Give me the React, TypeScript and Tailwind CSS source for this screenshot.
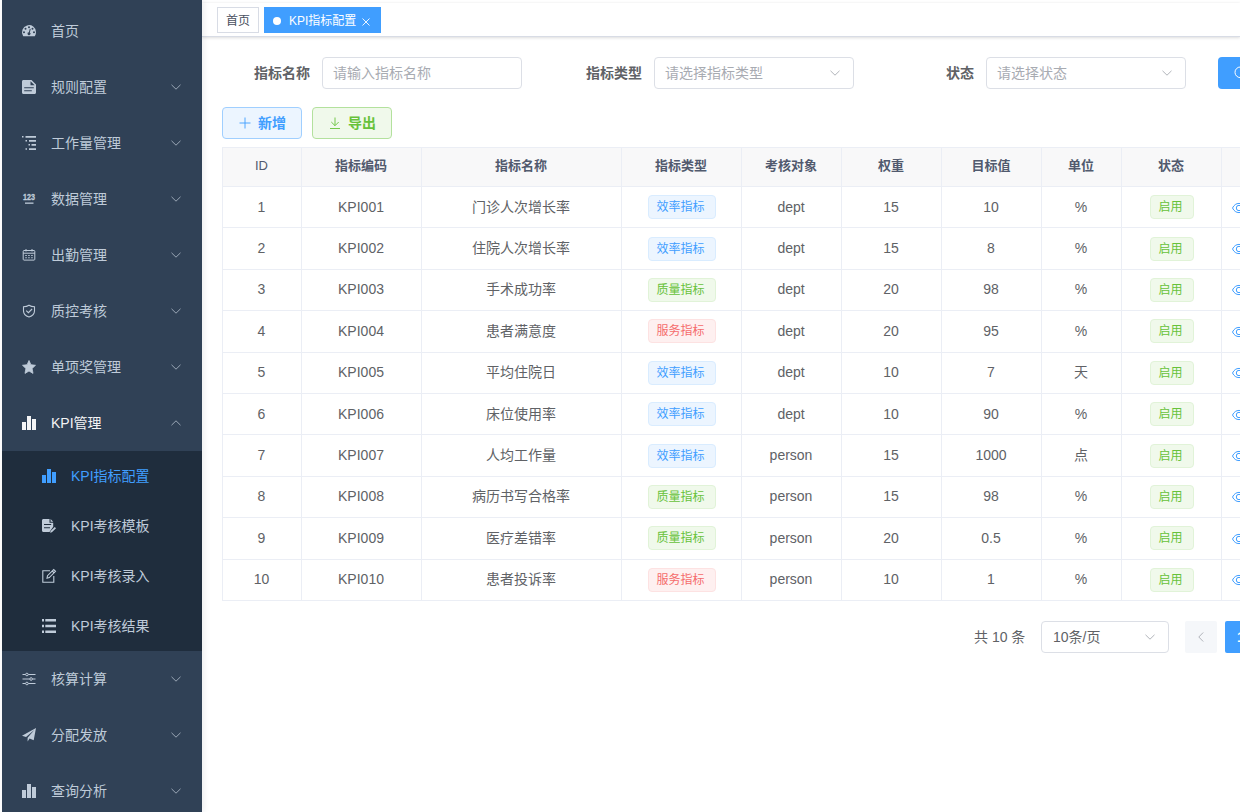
import { clsx } from "clsx";
import { ReactNode } from "react";

type IconName =
  | "dashboard"
  | "doc"
  | "tree"
  | "number"
  | "date"
  | "shield"
  | "star"
  | "chart"
  | "template"
  | "edit"
  | "list"
  | "slider"
  | "plane";

const icons: Record<IconName, ReactNode> = {
  dashboard: (
    <g transform="translate(0 1.2) scale(0.109375)">
      <path
        fillRule="evenodd"
        d="M128 64c0 12-3.4 23.800-10.100 34.300-.9 1.400-2.200 1.700-3.800 1.700H14c-1.700 0-3-.5-3.900-1.900A64 64 0 1 1 128 64zM9.200 64a9.100 9.100 0 1 0 18.200 0a9.100 9.100 0 1 0-18.200 0zM23 32a9.100 9.100 0 1 0 18.200 0a9.100 9.100 0 1 0-18.200 0zM55 18a9.100 9.100 0 1 0 18.200 0a9.100 9.100 0 1 0-18.200 0zM87 32a9.100 9.100 0 1 0 18.200 0a9.100 9.100 0 1 0-18.200 0zM100.600 64a9.100 9.100 0 1 0 18.200 0a9.100 9.100 0 1 0-18.200 0zM71.700 66l7.200-27.100c1-6-7-8-8.800-2.200l-7.200 27.100a13.700 13.700 0 1 0 8.800 2.200z"
      />
    </g>
  ),
  doc: (
    <path
      fillRule="evenodd"
      d="M1.500 0h8L14 4.500v8c0 .9-.6 1.500-1.500 1.500h-11C.6 14 0 13.400 0 12.500v-11C0 .6.600 0 1.500 0zM8.500 1.200v4h4.200zM2.200 7.300v1h9.600v-1zM2.200 10.200v1h7.600v-1z"
    />
  ),
  tree: (
    <path d="M0 0h1.500v1.500H0zM3.500 0H14v1.700H3.500zM3.500 4H5v1.500H3.500zM7 4h7v1.700H7zM6.500 8H8v1.500H6.500zM9.500 8H14v1.700H9.500zM3.500 12.200H5v1.500H3.500zM7 12.200h7v1.700H7z" />
  ),
  number: (
    <>
      <text
        x="1"
        y="8.300"
        fontSize="9"
        fontWeight="700"
        textLength="12"
        lengthAdjust="spacingAndGlyphs"
        stroke="currentColor"
        strokeWidth=".3"
      >
        123
      </text>
      <path d="M3 10.500h8.500v1.300H3z" />
    </>
  ),
  date: (
    <>
      <path
        fill="none"
        stroke="currentColor"
        d="M2 2.500h10c.5 0 .8.300.8.800v8c0 .5-.3.800-.8.800H2c-.5 0-.8-.3-.8-.8v-8c0-.5.300-.8.800-.8zM1.200 5.200h11.600M4 1v2.500M10 1v2.500"
      />
      <path d="M3.300 7h1.500v1H3.300zM6.200 7h1.500v1H6.200zM9.200 7h1.500v1H9.200zM3.300 9.300h1.500v1H3.300zM6.200 9.300h1.500v1H6.200zM9.200 9.300h1.500v1H9.200z" />
    </>
  ),
  shield: (
    <path
      fill="none"
      stroke="currentColor"
      strokeWidth="1.100"
      d="M7 1.200c1.500 1 3.400 1.500 5.500 1.500v4c0 3-2 5.200-5.500 6.300C3.500 11.900 1.500 9.700 1.500 6.700v-4c2.100 0 4-.5 5.500-1.500zM4.200 6.700l2.200 2 3.700-3.700"
    />
  ),
  star: (
    <path
      stroke="currentColor"
      strokeWidth=".8"
      strokeLinejoin="round"
      d="M7 .5l1.900 4.200 4.600.6-3.400 3.200.9 4.900L7 11 3 13.400l.9-4.900L.5 5.300l4.600-.6z"
    />
  ),
  chart: <path d="M0 6h4v8H0zM5 0h4v14H5zM10 3h4v11h-4z" />,
  template: (
    <>
      <path
        fillRule="evenodd"
        d="M1.500 0H7.500v3.700h3.700v4L7.500 13H1.500C.6 13 0 12.400 0 11.500v-10C0 .6.600 0 1.500 0zM2 5v1h7.200V5zM2 8.300v1h6v-1z"
      />
      <path d="M8.600 0l2.600 2.700H8.600zM12.800 8l1.200 1.200-4.100 4-1.800.6.500-1.800z" />
    </>
  ),
  edit: (
    <path
      fill="none"
      stroke="currentColor"
      strokeWidth="1.100"
      d="M8 1.800H.8v11.400h11V7M5 9.300l.5-2.600L11.700.6l1.800 1.700-6.200 6.300zM10.300 2l1.800 1.800"
    />
  ),
  list: (
    <path d="M0 0h2v2.500H0zM3.300 0H14v2.500H3.300zM0 5.700h2v2.500H0zM3.300 5.700H14v2.500H3.300zM0 11.400h2v2.500H0zM3.300 11.400H14v2.500H3.300z" />
  ),
  slider: (
    <path
      fill="none"
      stroke="currentColor"
      d="M.5 2.500h3M6.300 2.500h7.200M.5 7h7.200M10.500 7h3M.5 11.500h3M6.300 11.500h7.200M3.600 2.500a1.300 1.300 0 1 0 2.600 0a1.300 1.300 0 1 0-2.600 0zM7.800 7a1.300 1.300 0 1 0 2.600 0a1.300 1.300 0 1 0-2.600 0zM3.600 11.500a1.300 1.300 0 1 0 2.600 0a1.300 1.300 0 1 0-2.600 0z"
    />
  ),
  plane: (
    <path d="M14 0L11.700 12.200 7.600 10.400 5.600 13.500V9.700L12.300 2 4 9.100 0 7.700z" />
  ),
};

function Icon({ name }: { name: IconName }) {
  return (
    <svg viewBox="0 0 14 14" className="size-3.5 shrink-0 overflow-visible fill-current">
      {icons[name]}
    </svg>
  );
}

function Chevron({ className }: { className?: string }) {
  return (
    <svg viewBox="0 0 12 12" className={clsx("size-3 shrink-0 fill-none stroke-current", className)}>
      <path strokeWidth=".9" d="M1.500 3.800L6 8.200l4.500-4.400" />
    </svg>
  );
}

interface MenuItem {
  title: string;
  icon: IconName;
  leaf?: boolean;
  children?: MenuItem[];
}

const menu: MenuItem[] = [
  { title: "首页", icon: "dashboard", leaf: true },
  { title: "规则配置", icon: "doc" },
  { title: "工作量管理", icon: "tree" },
  { title: "数据管理", icon: "number" },
  { title: "出勤管理", icon: "date" },
  { title: "质控考核", icon: "shield" },
  { title: "单项奖管理", icon: "star" },
  {
    title: "KPI管理",
    icon: "chart",
    children: [
      { title: "KPI指标配置", icon: "chart" },
      { title: "KPI考核模板", icon: "template" },
      { title: "KPI考核录入", icon: "edit" },
      { title: "KPI考核结果", icon: "list" },
    ],
  },
  { title: "核算计算", icon: "slider" },
  { title: "分配发放", icon: "plane" },
  { title: "查询分析", icon: "chart" },
];

function Sidebar() {
  return (
    <aside className="relative z-10 ml-0.5 w-[200px] shrink-0 bg-[#304156] pt-[3px] text-sm text-[#bfcbd9] shadow-[2px_0_6px_rgba(0,21,41,0.08)]">
      {menu.map((item) => (
        <div key={item.title}>
          <div
            className={clsx(
              "flex h-14 items-center pr-5 pl-5",
              item.children && "text-[#f4f4f5]"
            )}
          >
            <Icon name={item.icon} />
            <span className="ml-[15px] flex-1">{item.title}</span>
            {!item.leaf && (
              <Chevron className={clsx("text-[#a5b1bf]", item.children && "rotate-180")} />
            )}
          </div>
          {item.children && (
            <ul className="bg-[#1f2d3d]">
              {item.children.map((child, i) => (
                <li
                  key={child.title}
                  className={clsx("flex h-[50px] items-center pl-10", i === 0 && "text-[#409eff]")}
                >
                  <Icon name={child.icon} />
                  <span className="ml-[15px]">{child.title}</span>
                </li>
              ))}
            </ul>
          )}
        </div>
      ))}
    </aside>
  );
}

function TagsView() {
  return (
    <div className="mt-[3px] flex h-[34px] shrink-0 gap-[5px] border-b border-[#d8dce5] bg-white pt-1 pl-[15px] text-xs shadow-[0_1px_3px_0_rgba(0,0,0,0.12),0_0_3px_0_rgba(0,0,0,0.04)]">
      <div className="flex h-[26px] items-center border border-[#d8dce5] px-2 pt-0.5 text-[#495060]">
        首页
      </div>
      <div className="flex h-[26px] w-[117px] items-center border border-[#409eff] bg-[#409eff] pt-0.5 pl-2 text-white">
        <span className="mr-2 size-2 rounded-full bg-white" />
        KPI指标配置
        <svg viewBox="0 0 8 8" className="mt-0.5 ml-1.5 size-2 fill-none stroke-current">
          <path strokeWidth=".9" d="M.5.5l7 7M7.500.5l-7 7" />
        </svg>
      </div>
    </div>
  );
}

interface FieldProps {
  label: string;
  placeholder: string;
  select?: boolean;
}

function Field({ label, placeholder, select }: FieldProps) {
  return (
    <div className="mr-8 flex shrink-0 items-center">
      <label className="w-[100px] pr-3 text-right font-bold text-[#606266]">{label}</label>
      <div className="flex h-8 w-[200px] items-center justify-between rounded border border-[#dcdfe6] pr-3 pl-2.5 text-[#a8abb2]">
        {placeholder}
        {select && <Chevron />}
      </div>
    </div>
  );
}

const columns = [
  { title: "ID", width: "w-20 border-l" },
  { title: "指标编码", width: "w-[120px]" },
  { title: "指标名称", width: "w-[200px]" },
  { title: "指标类型", width: "w-[120px]" },
  { title: "考核对象", width: "w-[100px]" },
  { title: "权重", width: "w-[100px]" },
  { title: "目标值", width: "w-[100px]" },
  { title: "单位", width: "w-20" },
  { title: "状态", width: "w-[100px]" },
];

const tagStyles: Record<string, string> = {
  效率指标: "border-[#d9ecff] bg-[#ecf5ff] text-[#409eff]",
  质量指标: "border-[#e1f3d8] bg-[#f0f9eb] text-[#67c23a]",
  服务指标: "border-[#fde2e2] bg-[#fef0f0] text-[#f56c6c]",
  启用: "border-[#e1f3d8] bg-[#f0f9eb] text-[#67c23a]",
};

const rows = [
  ["1", "KPI001", "门诊人次增长率", "效率指标", "dept", "15", "10", "%", "启用"],
  ["2", "KPI002", "住院人次增长率", "效率指标", "dept", "15", "8", "%", "启用"],
  ["3", "KPI003", "手术成功率", "质量指标", "dept", "20", "98", "%", "启用"],
  ["4", "KPI004", "患者满意度", "服务指标", "dept", "20", "95", "%", "启用"],
  ["5", "KPI005", "平均住院日", "效率指标", "dept", "10", "7", "天", "启用"],
  ["6", "KPI006", "床位使用率", "效率指标", "dept", "10", "90", "%", "启用"],
  ["7", "KPI007", "人均工作量", "效率指标", "person", "15", "1000", "点", "启用"],
  ["8", "KPI008", "病历书写合格率", "质量指标", "person", "15", "98", "%", "启用"],
  ["9", "KPI009", "医疗差错率", "质量指标", "person", "20", "0.5", "%", "启用"],
  ["10", "KPI010", "患者投诉率", "服务指标", "person", "10", "1", "%", "启用"],
];

function KpiTable() {
  return (
    <div className="mt-2 w-[1240px] border-t border-[#ebeef5] text-[#606266]">
      <div className="flex h-[39px] bg-[#f8f8f9] text-[13px] font-bold text-[#515a6e]">
        {columns.map((col) => (
          <div
            key={col.title}
            className={clsx(
              "flex shrink-0 items-center justify-center border-r border-b border-[#ebeef5] pr-px pb-px",
              col.width,
              col.title === "ID" && "font-medium"
            )}
          >
            {col.title}
          </div>
        ))}
        <div className="flex-1 border-b border-[#ebeef5]" />
      </div>
      {rows.map((row) => (
        <div key={row[0]} className="flex h-[41.4px]">
          {row.map((cell, i) => (
            <div
              key={i}
              className={clsx(
                "flex shrink-0 items-center justify-center border-r border-b border-[#ebeef5]",
                columns[i].width,
                !tagStyles[cell] && "pr-px pb-px"
              )}
            >
              {tagStyles[cell] ? (
                <span
                  className={clsx(
                    "flex h-6 items-center rounded border pl-2 text-xs leading-none",
                    i === 3 ? "w-[68px]" : "w-11",
                    tagStyles[cell]
                  )}
                >
                  {cell}
                </span>
              ) : (
                cell
              )}
            </div>
          ))}
          <div className="flex flex-1 items-center border-b border-[#ebeef5] pt-px pl-2.5 text-[#409eff]">
            <svg viewBox="0 0 14 14" className="size-3.5 fill-none stroke-current">
              <path d="M.5 7C2 3.900 4.300 2.400 7 2.400S12 3.900 13.500 7C12 10.100 9.700 11.600 7 11.600S2 10.100.5 7z" />
              <circle cx="7" cy="7" r="2.700" />
            </svg>
          </div>
        </div>
      ))}
    </div>
  );
}

function Pagination() {
  return (
    <div className="mt-5 flex h-8 w-[1240px] items-center pl-[752px] text-[#606266]">
      <span className="w-[67px]">共 10 条</span>
      <div className="flex h-8 w-32 items-center justify-between rounded border border-[#dcdfe6] pr-3 pl-[11px]">
        10条/页
        <Chevron className="text-[#a8abb2]" />
      </div>
      <div className="ml-4 flex size-8 items-center justify-center rounded-xs bg-[#f5f7fa] text-[#a8abb2]">
        <Chevron className="rotate-90" />
      </div>
      <div className="ml-2 flex size-8 items-center justify-center rounded-xs bg-[#409eff] font-bold text-white">
        1
      </div>
    </div>
  );
}

export default function App() {
  return (
    <div className="flex h-[812px] w-[1240px] overflow-hidden bg-white font-['Liberation_Sans','Noto_Sans_CJK_SC',sans-serif] text-sm">
      <Sidebar />
      <main className="flex min-w-0 flex-1 flex-col overflow-hidden">
        <TagsView />
        <div className="pt-5 pl-5">
          <div className="flex">
            <Field label="指标名称" placeholder="请输入指标名称" />
            <Field label="指标类型" placeholder="请选择指标类型" select />
            <Field label="状态" placeholder="请选择状态" select />
            <button className="flex h-8 w-20 shrink-0 items-center rounded bg-[#409eff] pl-4 text-white">
              <svg viewBox="0 0 14 14" className="size-3.5 fill-none stroke-current">
                <circle cx="6.300" cy="6.300" r="5.300" />
                <path d="M10.200 10.200l3.300 3.300" />
              </svg>
            </button>
          </div>
          <div className="mt-[18px] flex gap-2.5 font-bold">
            <button className="flex h-8 w-20 items-center justify-center gap-1.5 rounded border border-[#a0cfff] bg-[#ecf5ff] text-[#409eff]">
              <svg viewBox="0 0 14 14" className="size-3.5 fill-none stroke-current">
                <path strokeWidth=".9" d="M1.500 7h11M7 1.500v11" />
              </svg>
              新增
            </button>
            <button className="flex h-8 w-20 items-center justify-center gap-1.5 rounded border border-[#b3e19d] bg-[#f0f9eb] text-[#67c23a]">
              <svg viewBox="0 0 14 14" className="size-3.5 fill-none stroke-current">
                <path strokeWidth=".9" d="M7 1.500v8M3.300 6L7 9.700 10.700 6M2 12.500h10" />
              </svg>
              导出
            </button>
          </div>
          <KpiTable />
          <Pagination />
        </div>
      </main>
    </div>
  );
}
